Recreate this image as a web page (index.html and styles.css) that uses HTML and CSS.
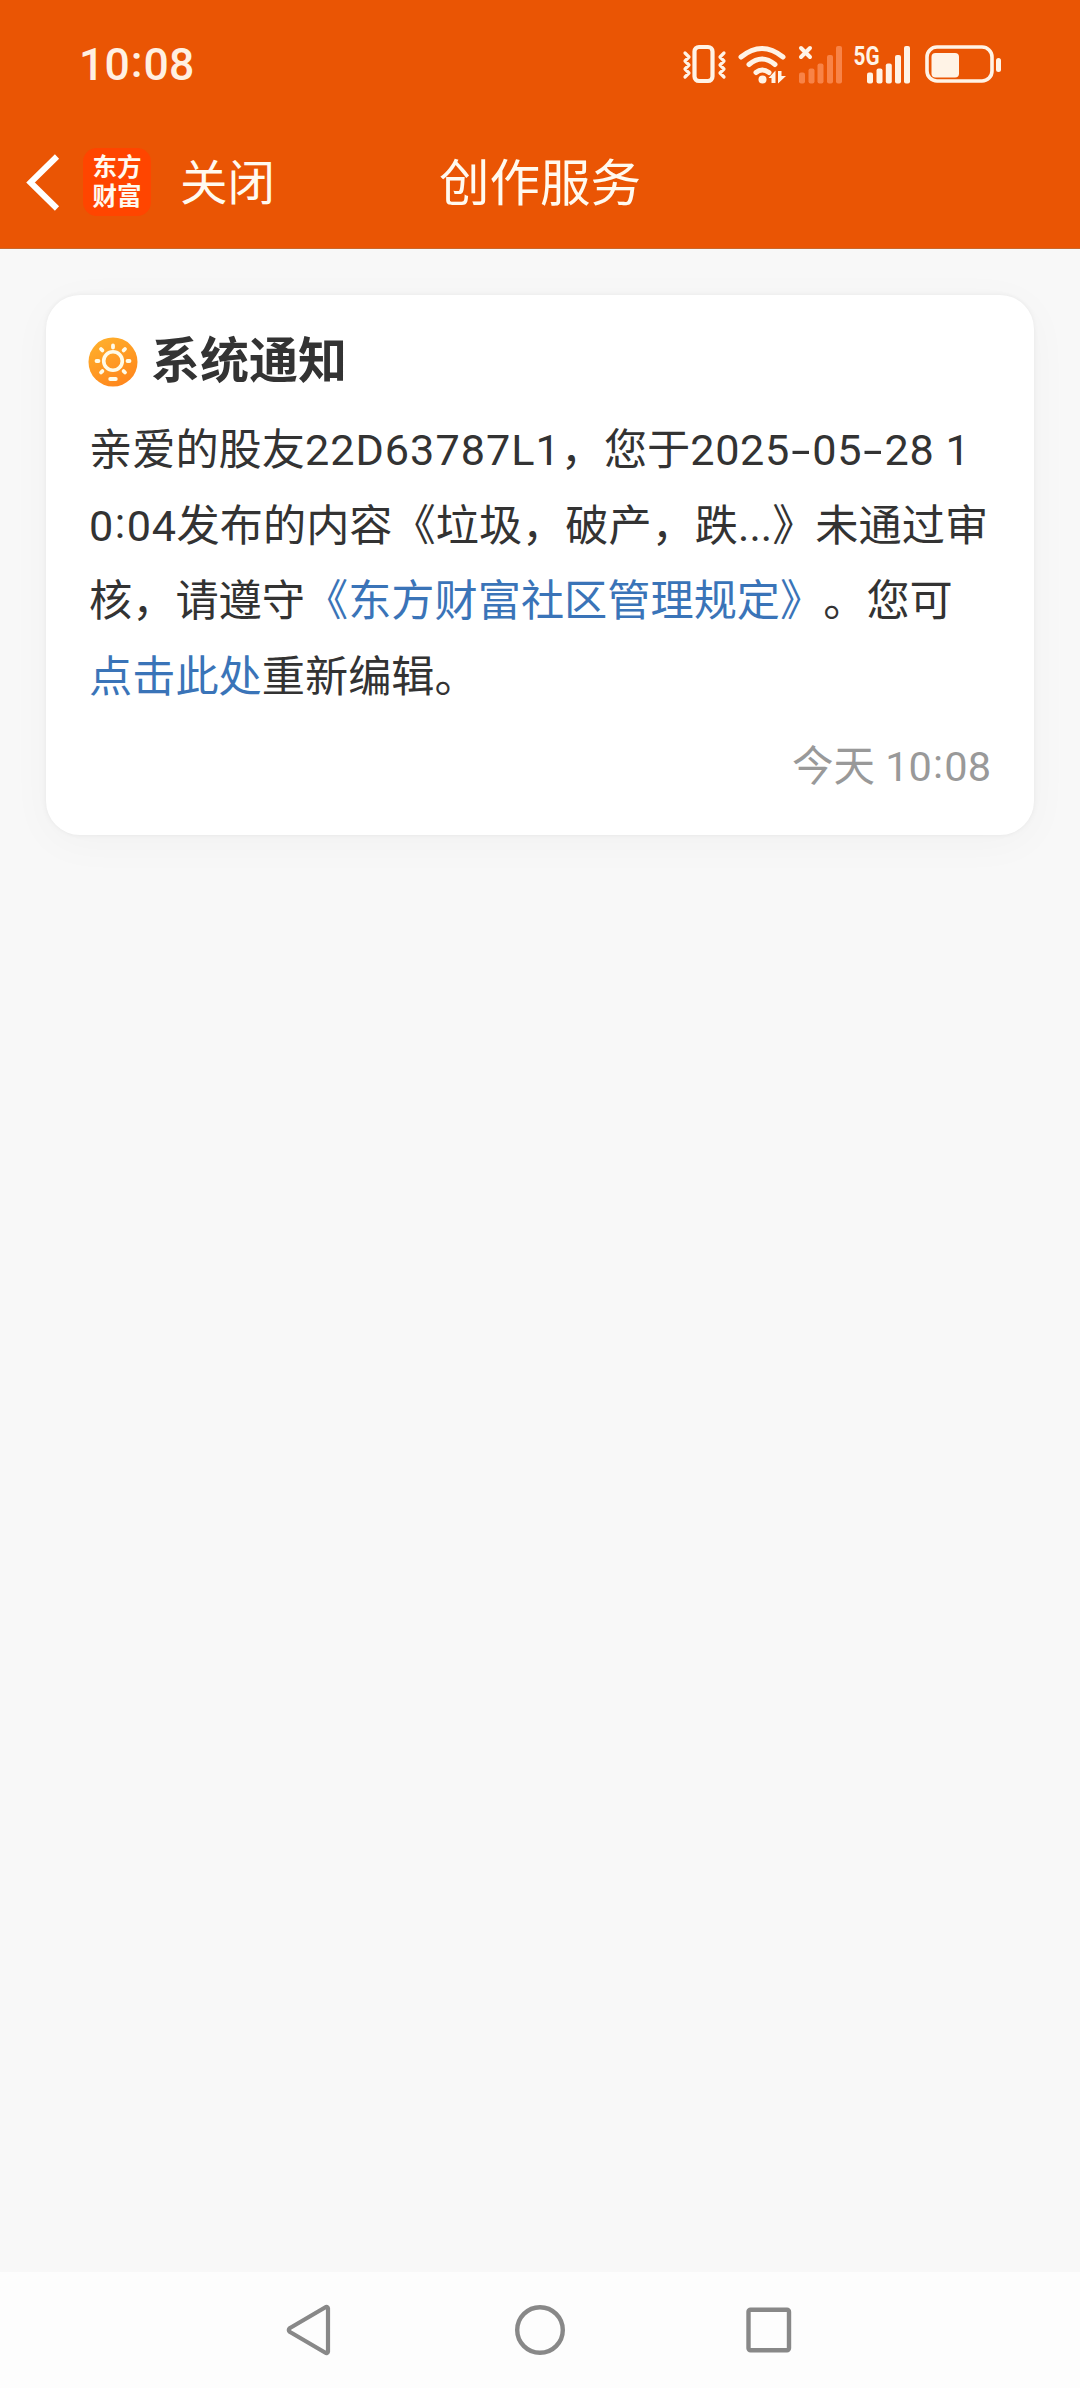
FILE: index.html
```html
<!DOCTYPE html>
<html lang="zh-CN">
<head>
<meta charset="utf-8">
<title>创作服务</title>
<link rel="stylesheet" href="styles.css">
</head>
<body>
<header class="header">
  <div class="status">
    <span class="clock">10<i class="colon">:</i>08</span>
    <svg class="status-icons" width="324" height="42" viewBox="0 0 324 42">
      <g fill="none" stroke="#fff3e6" stroke-linecap="round" stroke-linejoin="round">
        <rect x="12.5" y="3" width="18" height="34" rx="4.5" stroke-width="4.2"/>
        <path d="M3 9l4 4-4 4 4 4-4 4 4 4-4 4M42 9l-4 4 4 4-4 4 4 4-4 4 4 4" stroke-width="3.2"/>
        <path d="M59 13q21-17 42 0M67 20.500q13-11 26 0M74 28.500q6-5 13 0" stroke-width="5"/>
        <path d="M119 4l9 9M128 4l-9 9" stroke-width="4"/>
        <rect x="245" y="3" width="65" height="34" rx="10" stroke-width="3.6"/>
      </g>
      <g fill="#fff3e6">
        <circle cx="80.500" cy="35.500" r="4"/>
        <path d="M86.500 34l7-7.500v12.500h-4v-5zM96 27h3.500v5h4.500l-8 7.500z"/>
        <rect x="249.500" y="9" width="27.500" height="24.500" rx="4"/>
        <rect x="314" y="14" width="5" height="14" rx="2.5"/>
        <rect x="185" y="28.500" width="6" height="11" rx="2"/>
        <rect x="194.500" y="24.500" width="6" height="15" rx="2"/>
        <rect x="203.800" y="19.500" width="6" height="20" rx="2"/>
        <rect x="213" y="11" width="6" height="28.500" rx="2"/>
        <rect x="222" y="2" width="6" height="37.500" rx="2"/>
        <text class="net" x="171.500" y="20.500" textLength="26" lengthAdjust="spacingAndGlyphs">5G</text>
      </g>
      <g fill="#f88347">
        <rect x="117" y="28.500" width="6" height="11" rx="2"/>
        <rect x="126.500" y="24.500" width="6" height="15" rx="2"/>
        <rect x="135.500" y="19.500" width="6" height="20" rx="2"/>
        <rect x="145" y="11" width="6" height="28.500" rx="2"/>
        <rect x="154" y="2" width="6" height="37.500" rx="2"/>
      </g>
    </svg>
  </div>
  <div class="titlebar">
    <div class="left">
      <svg class="back" width="36" height="60" viewBox="0 0 36 60"><path d="M33 4.500L6.500 30.500 33 56.500" fill="none" stroke="#fff" stroke-width="6"/></svg>
      <div class="logo"><span>东方</span><span>财富</span></div>
      <span class="close">关闭</span>
    </div>
    <h1 class="title">创作服务</h1>
    <div class="right"></div>
  </div>
</header>
<main class="content">
  <section class="card">
    <div class="card-head">
      <svg width="50" height="50" viewBox="0 0 50 50">
        <defs><linearGradient id="sun" x1=".2" y1="0" x2=".7" y2="1"><stop offset="0" stop-color="#ffb02c"/><stop offset="1" stop-color="#ff861c"/></linearGradient></defs>
        <circle cx="25" cy="25" r="24.500" fill="url(#sun)"/>
        <g fill="none" stroke="#fffbe8" stroke-linecap="round">
          <circle cx="25" cy="24" r="9.300" stroke-width="3.600"/>
          <path d="M25 8.500v2M8.500 24h2M39.500 24h2M13 12l1.400 1.400M37 12l-1.400 1.400M13 35.500l1.400-1.400M37 35.500l-1.400-1.400M22.200 42h5.600" stroke-width="3.800"/>
        </g>
      </svg>
      <h2 class="card-title">系统通知</h2>
    </div>
    <div class="message">
      <div class="line">亲爱的股友<span class="uid">22D63787L1</span>，您于<span class="num">2025<i class="dash">-</i>05<i class="dash">-</i>28 1</span></div>
      <div class="line"><span class="hm">0<i class="colon">:</i>04</span>发布的内容《垃圾，破产，跌...》未通过审</div>
      <div class="line">核，请遵守<a class="link">《东方财富社区管理规定》</a>。您可</div>
      <div class="line"><a class="link">点击此处</a>重新编辑。</div>
    </div>
    <time class="time">今天 10<i class="colon">:</i>08</time>
  </section>
</main>
<nav class="nav">
  <svg width="50" height="60" viewBox="0 0 50 60"><path d="M45 8.500Q44.500 6 42 7.500L7 28Q4.500 30 7 32L42 52.500Q44.500 54 45 51.500Z" fill="none" stroke="#888" stroke-width="4.200" stroke-linejoin="round"/></svg>
  <svg class="home" width="60" height="60" viewBox="0 0 60 60"><circle cx="30" cy="30" r="22.800" fill="none" stroke="#888" stroke-width="4.400"/></svg>
  <svg width="50" height="60" viewBox="0 0 50 60"><rect x="4.500" y="9.800" width="40.500" height="40.500" rx="2" fill="none" stroke="#888" stroke-width="4.400"/></svg>
</nav>
</body>
</html>
```
FILE: styles.css
```css
* { box-sizing: border-box; }
body {
  margin: 0;
  height: 2388px;
  display: flex;
  flex-direction: column;
  background: #f8f8f8;
  color: #333;
  font-family: Roboto, "Noto Sans CJK SC", sans-serif;
  text-spacing-trim: space-all;
}
svg { display: block; flex: none; }
h1, h2 { margin: 0; }
.header {
  height: 249px;
  background: #ea5504;
  border-bottom: 1px solid #c9672c;
  color: #fffaf0;
}
.status {
  height: 130px;
  padding: 0 74px 0 79px;
  display: flex;
  justify-content: space-between;
  align-items: center;
}
.status-icons { overflow: visible; }
.clock {
  font-size: 44.500px;
  font-weight: 500;
  line-height: 60px;
  letter-spacing: .3px;
  color: #fff0e2;
}
.net { font: 700 25px Roboto, sans-serif; }
.titlebar {
  height: 103px;
  display: grid;
  grid-template-columns: 1fr auto 1fr;
  align-items: center;
}
.left { display: flex; align-items: center; padding-left: 24px; }
.logo {
  width: 68px;
  height: 68px;
  margin: 0 29px 0 23px;
  padding: 3px 0 7px;
  border-radius: 14px;
  background: #ff4500;
  display: flex;
  flex-direction: column;
  align-items: center;
  font: 700 24.500px/29px "Noto Sans CJK SC", sans-serif;
}
.close { font-size: 47.500px; line-height: 66px; padding-top: 4px; }
.title { font-size: 50.500px; line-height: 66px; font-weight: 400; padding-top: 4px; }
.content { flex: 1; padding: 46px 46px 0; }
.card {
  height: 540px;
  padding: 36px 43px 0 42px;
  border-radius: 34px;
  background: #fff;
  box-shadow: 0 0 5px rgba(0, 0, 0, .06), 0 8px 44px rgba(0, 0, 0, .03);
  display: flex;
  flex-direction: column;
}
.card-head { height: 62px; display: flex; align-items: center; gap: 13px; }
.card-title { font-size: 49px; line-height: 62px; font-weight: 700; }
.message { margin: 20px 0 0 1px; font-size: 43.200px; }
.line { height: 75.700px; line-height: 75.700px; white-space: nowrap; }
.uid { letter-spacing: 1px; }
.num { letter-spacing: .6px; }
.hm { letter-spacing: .6px; }
.dash {
  display: inline-block;
  width: 22.500px;
  text-align: center;
  font-style: normal;
  transform: scaleX(1.600);
}
.colon {
  display: inline-block;
  width: .3em;
  text-align: center;
  font-style: normal;
  transform: translateY(-.07em);
}
.link { color: #3a74b8; }
.time { align-self: flex-end; margin-top: 21px; font-size: 41.500px; line-height: 60px; color: #999; }
.nav {
  height: 116px;
  padding-left: 283px;
  background: #fdfdfd;
  display: flex;
  align-items: center;
  gap: 174px;
}
.home { margin-left: 3px; }
```
